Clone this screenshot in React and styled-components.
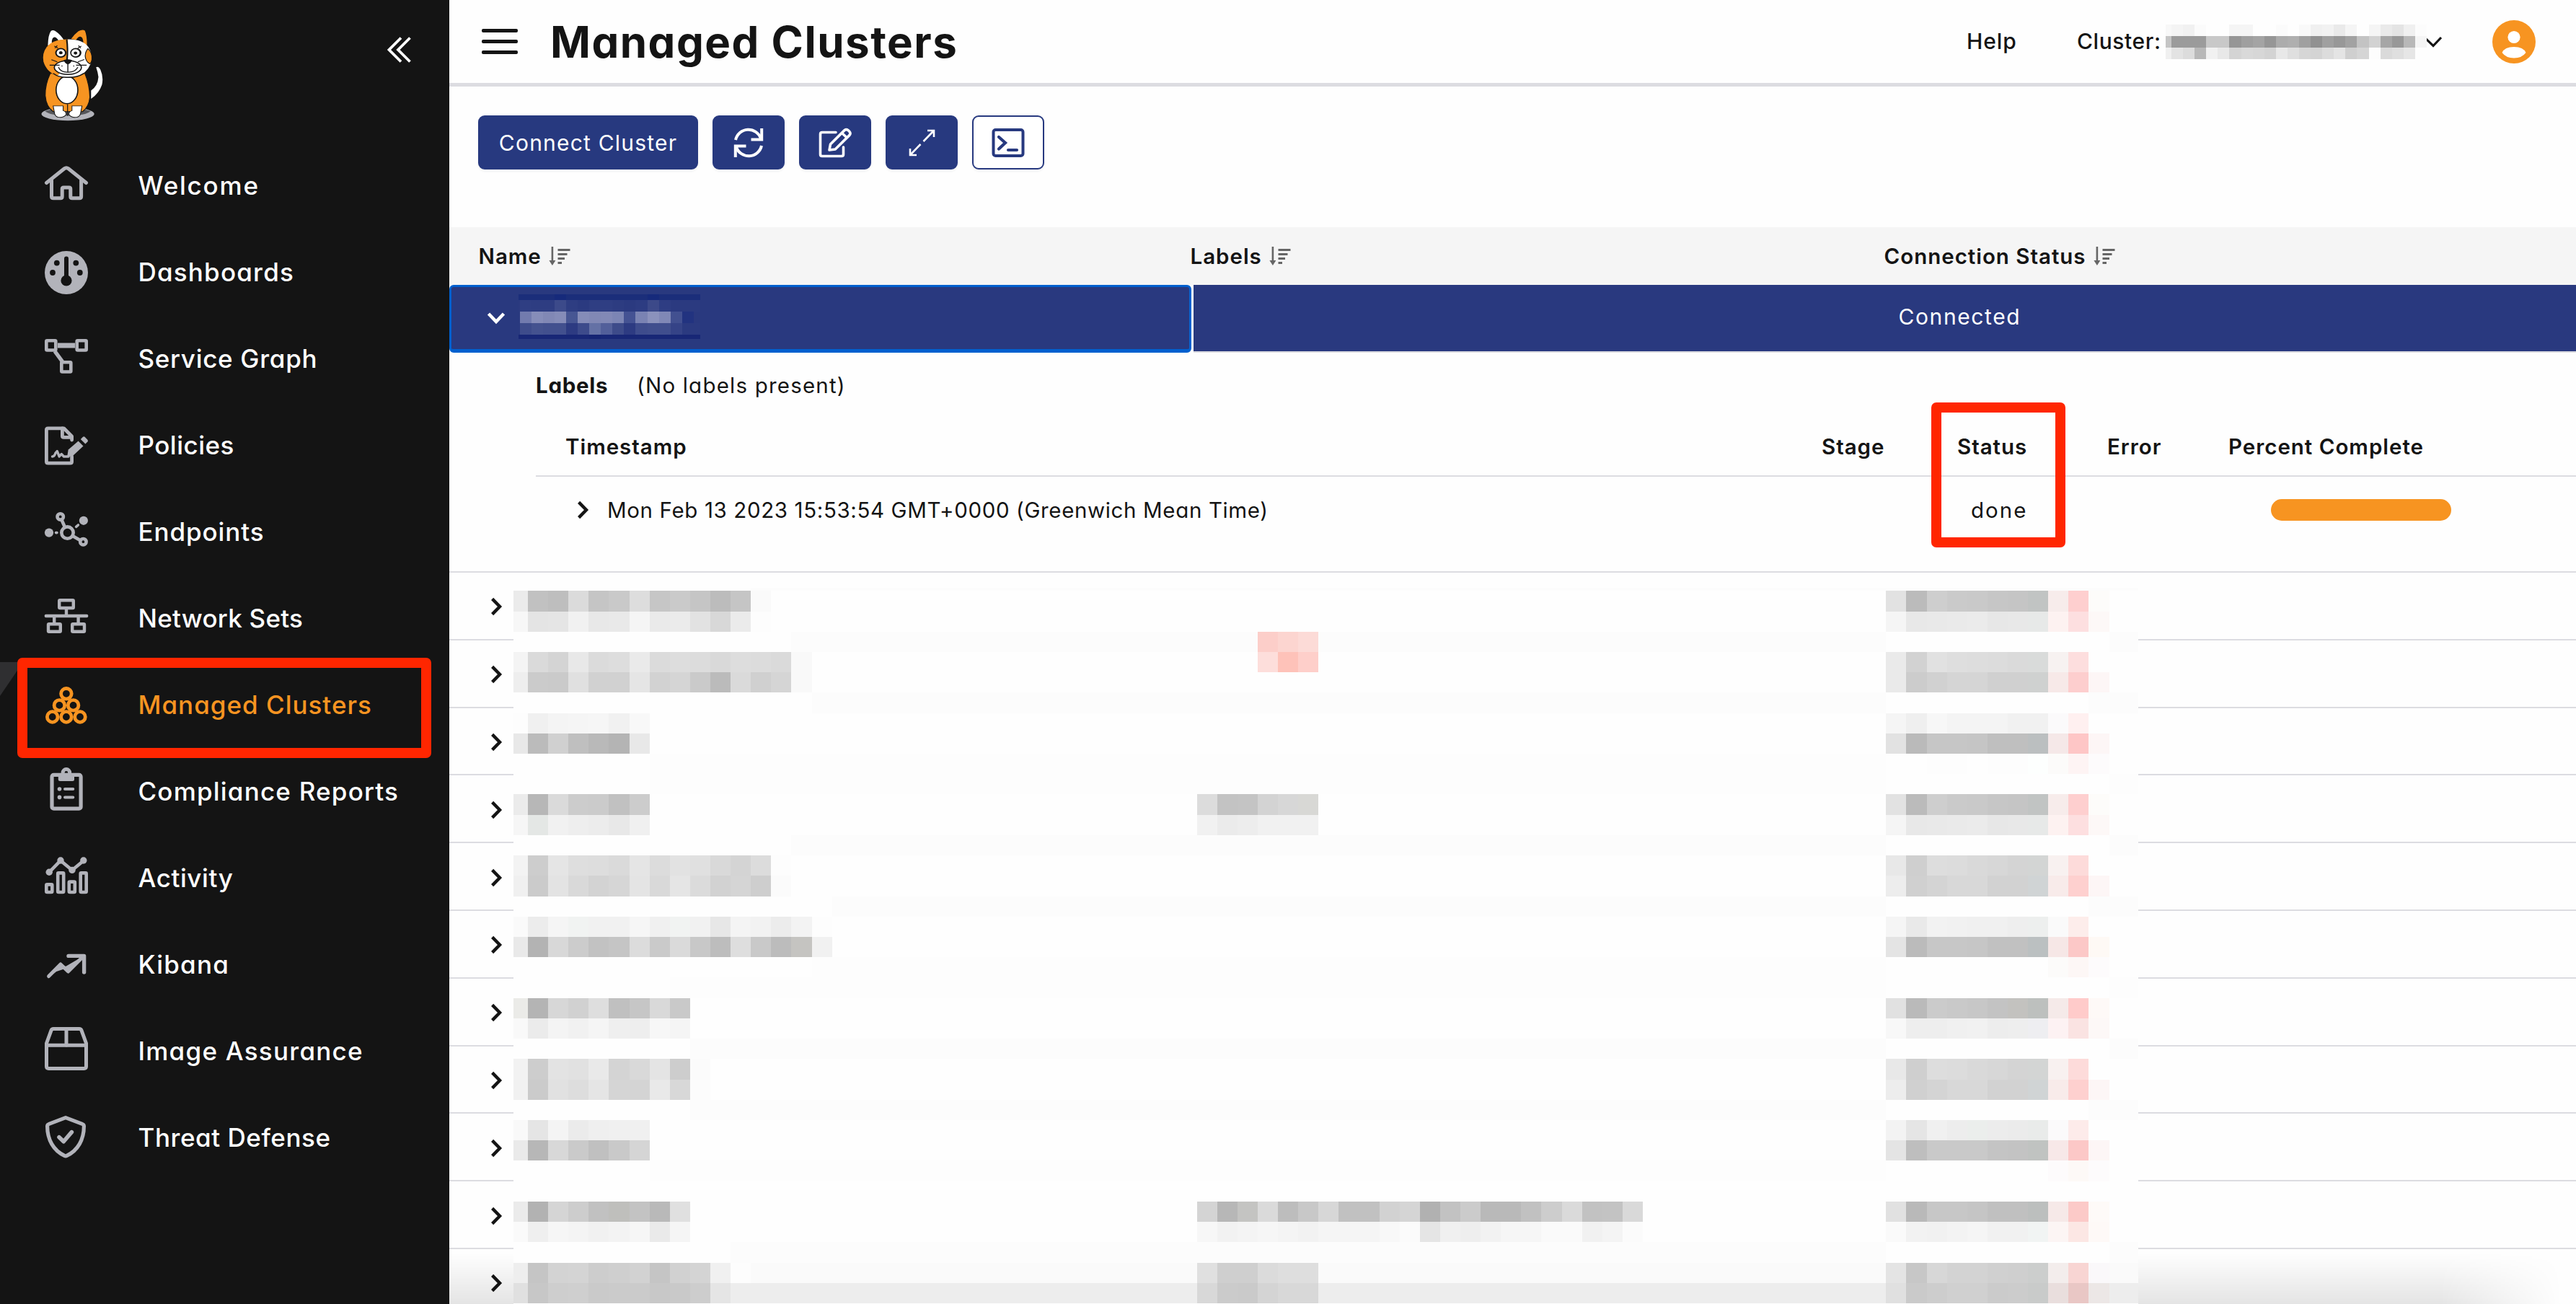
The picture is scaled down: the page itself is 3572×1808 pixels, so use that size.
import React from "react";
import styled, { createGlobalStyle } from "styled-components";

const Global = createGlobalStyle`
  * { box-sizing: border-box; }
  html, body { margin: 0; padding: 0; background: #fff; }
  body {
    font-family: Inter, "Open Sans", sans-serif;
    font-feature-settings: "cv11";
    color: #141414;
    overflow: hidden;
  }
`;

const orange = "#f79421";
const navy = "#27397f";
const rule = "#dcdce1";
const red = "#ff2600";

const Page = styled.div`
  display: flex;
  width: 3572px;
  height: 1808px;
  overflow: hidden;
`;

/* ---------- sidebar ---------- */
const Sidebar = styled.aside`
  flex: none;
  width: 623px;
  background: #141414;
`;
const Brand = styled.div`
  display: flex;
  justify-content: space-between;
  align-items: flex-start;
  height: 199px;
  padding: 41px 53px 0 57px;
`;
const Collapse = styled.svg`
  margin-top: 10px;
`;
const NavItem = styled.div`
  position: relative;
  display: flex;
  align-items: center;
  height: 120px;
  padding-left: 62px;
  color: ${(p) => (p.$active ? orange : "#fff")};
`;
const NavIcon = styled.svg`
  flex: none;
  width: 60px;
  height: 60px;
  margin-top: -10px;
  margin-right: 69.5px;
  overflow: visible;
  color: ${(p) => (p.$active ? orange : "#b2b3ba")};
`;
const NavLabel = styled.span`
  font-size: 35px;
  font-weight: 500;
  line-height: 40px;
  margin-top: -5px;
  white-space: nowrap;
  letter-spacing: ${(p) => p.$ls || 0}px;
`;
const ActiveWedge = styled.span`
  position: absolute;
  left: 0;
  top: -1px;
  width: 32px;
  height: 47px;
  background: #2f2f31;
  clip-path: polygon(0 0, 100% 0, 0 100%);
`;
const Highlight = styled.div`
  position: absolute;
  left: ${(p) => p.$x}px;
  top: ${(p) => p.$y}px;
  width: ${(p) => p.$w}px;
  height: ${(p) => p.$h}px;
  border: 14px solid ${red};
  border-radius: 7px;
`;

/* ---------- header ---------- */
const Main = styled.main`
  position: relative;
  display: flex;
  flex-direction: column;
  flex: 1;
  min-width: 0;
  background: #fefefe;
`;
const Header = styled.header`
  display: flex;
  align-items: center;
  flex: none;
  height: 120px;
  padding: 0 56px 0 45px;
  border-bottom: 5px solid ${rule};
`;
const Burger = styled.div`
  display: flex;
  flex-direction: column;
  gap: 10px;
  width: 50px;
  margin-right: 45px;
`;
const BurgerBar = styled.span`
  height: 5px;
  border-radius: 2px;
  background: #141414;
`;
const Title = styled.h1`
  flex: 1;
  margin: 0;
  font-size: 60px;
  line-height: 70px;
  font-weight: 700;
  white-space: nowrap;
  letter-spacing: 1.5px;
`;
const HeaderText = styled.span`
  width: ${(p) => p.$w}px;
  font-size: 30px;
  line-height: 36px;
  margin-top: -1px;
  white-space: nowrap;
  font-weight: 500;
  letter-spacing: ${(p) => p.$ls || 0}px;
`;
const HeaderChevron = styled.svg`
  margin-right: 69px;
`;

/* ---------- toolbar ---------- */
const Toolbar = styled.div`
  display: flex;
  flex: none;
  gap: 20px;
  height: 195px;
  padding: 40px 0 0 40px;
`;
const Button = styled.button`
  display: flex;
  align-items: center;
  justify-content: center;
  width: ${(p) => p.$w || 100}px;
  height: 75px;
  padding: 0;
  border: 2px solid ${navy};
  border-radius: 9px;
  background: ${(p) => (p.$outline ? "#fff" : navy)};
  color: ${(p) => (p.$outline ? navy : "#fff")};
  box-shadow: 0 3px 3px rgba(0, 0, 0, 0.04);
  font-family: inherit;
  font-feature-settings: inherit;
  font-size: 30px;
  white-space: nowrap;
  letter-spacing: 1.2px;
`;

/* ---------- table ---------- */
const columns = "987px 962px 1fr";
const TableHead = styled.div`
  display: grid;
  grid-template-columns: ${columns};
  align-items: center;
  flex: none;
  height: 80px;
  padding-left: 40.5px;
  background: #f5f5f5;
`;
const HeadCell = styled.div`
  display: flex;
  align-items: center;
  gap: 10px;
  font-size: 29.5px;
  line-height: 34px;
  font-weight: 600;
  white-space: nowrap;
  font-feature-settings: normal;
  letter-spacing: 0.98px;
`;
const SelectedRow = styled.div`
  display: flex;
  flex: none;
  height: 94px;
`;
const FocusCell = styled.div`
  display: flex;
  align-items: center;
  width: 1029px;
  padding-left: 49px;
  background: #29397f;
  border: 3px solid #0060cf;
  border-bottom-width: 5px;
  border-radius: 6px;
`;
const RowRest = styled.div`
  flex: 1;
  margin-left: 3px;
  padding: 26px 0 0 977.5px;
  background: #29397f;
  border-bottom: 2px solid ${rule};
  color: #fff;
  font-size: 30px;
  line-height: 36px;
  white-space: nowrap;
  font-feature-settings: normal;
  letter-spacing: 1.6px;
`;
const Row = styled.div`
  display: flex;
  align-items: center;
  flex: none;
  height: 93.8px;
  padding: 3px 0 0 57px;
  border-bottom: 2px solid ${rule};
`;

const Detail = styled.section`
  flex: none;
  height: 305px;
  padding-left: 120px;
  border-bottom: 2px solid ${rule};
`;
const DetailLabels = styled.div`
  display: flex;
  align-items: center;
  height: 89px;
  font-size: 29.5px;
  line-height: 34px;
  white-space: nowrap;
`;
const DetailName = styled.strong`
  width: 140px;
  font-weight: 700;
  letter-spacing: 0.7px;
`;
const Spaced = styled.span`
  letter-spacing: ${(p) => p.$ls || 0}px;
`;
const DetailGrid = styled.div`
  display: grid;
  grid-template-columns: 1742px 188px 208px 168px 1fr;
  align-items: center;
  padding-left: 41px;
  white-space: nowrap;
`;
const DetailHead = styled(DetailGrid)`
  height: 83px;
  border-bottom: 2px solid ${rule};
  font-size: 29.5px;
  font-weight: 600;
  font-feature-settings: normal;
  letter-spacing: 0.98px;
`;
const DetailRow = styled(DetailGrid)`
  height: 91px;
  font-size: 29.5px;
`;
const Stamp = styled.div`
  display: flex;
  align-items: center;
  gap: 25px;
  padding-left: 16px;
`;
const StatusCell = styled.div`
  grid-column: 3;
  padding-left: 19px;
  letter-spacing: 2px;
`;
const Progress = styled.div`
  grid-column: 5;
  width: 250px;
  height: 30px;
  margin-left: 59px;
  border-radius: 15px;
  background: ${orange};
`;

/* ---------- pixelated redactions ---------- */
const Pixels = styled.div`
  display: grid;
  flex: none;
  grid-template-columns: ${(p) => p.$cols};
  grid-template-rows: ${(p) => p.$rows};
`;
const NamePixels = styled(Pixels)`
  margin: 0 0 4px 18px;
`;
const PixelSheet = styled(Pixels)`
  position: absolute;
  left: 89px;
  top: 815px;
  width: 2253px;
  height: 993px;
  overflow: hidden;
  background: #fefefe;
`;
const Pixel = styled.i.attrs((p) => ({
  style: { gridRow: p.$r, gridColumn: `${p.$c} / span ${p.$n || 1}`, background: p.$bg },
}))``;
const BottomShade = styled.div`
  position: absolute;
  left: 0;
  right: 0;
  bottom: 0;
  height: 70px;
  background: linear-gradient(rgba(0, 0, 0, 0), rgba(0, 0, 0, 0.1));
  mask-image: linear-gradient(90deg, #000 2760px, transparent 2930px);
`;

const hex = (v) => "#" + (v.length === 2 ? v + v + v : v);
const strip = (row, col, text) =>
  text.split(" ").map((v, i) => <Pixel key={`${row}-${col + i}`} $r={row} $c={col + i} $bg={hex(v)} />);

const nameCells = [
  [0, "eb c1 be db c5 c9 dd c6 ca c5 bc c5 fa"],
  [1, "f7 e4 e5 f1 e8 e9 f5 ea eb e2 d8 eb fd"],
  [3, "f4 da d4 e8 db dd ea db dd dc d9 dd dc da f9"],
  [4, "ee cb ca e0 d1 d1 e5 d2 d5 ca bb da d0 d5 f9"],
  [6, "fd f0 f4 f5 f6 f1 f8"],
  [7, "e8 bb d0 bf b9 b4 e8"],
  [10, "eb b7 da cc cb c1 cc"],
  [11, "f6 e4e7e5 f1 ee ec e8 f0"],
  [13, "f3 cd e5 de dd da e5 dc e2 e0 d9 d4 dc fd"],
  [14, "f0 cb e3 d9 d3 d6 e4 d9 e5 db d2 d5 ce fb"],
  [16, "fa ec f5 f1f3f2 f1 f1 f6 f0 f1f3f2 f1 e7 f4 f2 ec f3 fd"],
  [17, "e9 b3 d8 cc c2 c5 dc ca da c8 bd de c9 bc c5c4c1 f1"],
  [20, "ebebe8 b4 d7 d1 de c0 c6 d9 c9"],
  [21, "f9 eb f4 f1 f5 ef ee f7 f5"],
  [23, "f2 cd e3 e1 e9 d4 d9 e4 cd fb"],
  [24, "f1 cb e1 dd e5 d5 d4 e9 d8 fc"],
  [26, "f9 e5 f4 eb ef f0 f0"],
  [27, "ea b7 d8 ca c0 c9 d5"],
  [30, "eb b2 d5 cd c1 bfbfbc c3 b9 e0"],
  [31, "fa ef f6 f4 f1 f3 f6 ea f5"],
  [33, "ee c5 d3 d4 cd cf d2 c5 d1 d4 f0 fd"],
  [34, "e0 c7 ce cf ca cb cb c8 c9 cd e5"],
];
const labelCells = [
  [2, 38, "fccec9 fcd5d0 fcdbd7"],
  [3, 38, "fddedb fec2b9 fecfca"],
  [10, 35, "dc c3 c4 d3 d7 d8d8d5"],
  [11, 35, "f1 eb ed f1 f1 f1"],
  [30, 35, "d4 b7 c4c4c2 da bd c8 d7 c1 c1 d2 d5 b1 c2 cb b9 b9 c1 cd da c2 c3 d9"],
  [31, 35, "f7 f2 f4 f6 f4 f2 f5 f5 f5 f8 fb e5 f0 ee f2 f6 f6 fa fa f1 f4 fb"],
  [33, 35, "e0 cf cf db de de"],
  [34, 35, "d8 cb ca d4 d8 d8"],
];
const sA = "e2 bb ce ca c9 c6 c5 c1c4c3 f7eceb fecfcf fdfcfa";
const sB = "f5 e8 e9 ea eb e7 e8 e7e9e8 fdf2f1 fddfe0 fdf8f7";
const sC = "e8 cf dd dc d9 d7 d4 d3d5d4 f8f1f0 fddbda";
const sD = "ed d0 d4 d8 d8 d2 d2 d0d4d5 f8ebea fed0cf fdf6f6";
const statusCells = [
  [0, sA],
  [1, sB],
  [3, "ea d2 e1 de dd dc da d9dbda f7f2f1 fddede"],
  [4, "ea cc d1 d5 d5 d0 d0 cfd1d0 f7e9e8 fdcece fdf6f6"],
  [6, "f5 ef f7 f4 f4 f4 f1 f1 fbfafb fff0f0"],
  [7, "e2 ba c6 c6 c5 bf bf bbbfc0 f5e8e8 fec6c6 fdf6f6"],
  [8, "fe fe fd fd fe fd fd fdfffe fcfbfa fef4f4 fdfbfc"],
  [10, sA],
  [11, sB],
  [13, sC],
  [14, sD],
  [16, "f5 e9 f2 f1 f0 f0 ee edefee fafafa fdedeb"],
  [17, "e4 bb c7 c7 c6 c1 c1 bbc0c1 f6e7e6 fcc8c7 fef9f5"],
  [18, "fe fe fe fe fe fe fe fe fcfbfa fdf7f6 fdfbfc"],
  [20, "e1 ba cb c9 c7 c3 c3c2bf bdc0be f5eae9 ffcbca fef9f7"],
  [21, "f8 ee ee f0 f1 ed ee eeeef1 fdf2f3 fae3e2 fdf8f7"],
  [23, sC],
  [24, sD],
  [26, "f3 e5 f0 ed ebeeec ec eb e9ebea fbfafb fdebea"],
  [27, "e4 be c9 c9 c9 c4 c3 c0c3c1 f7e8e8 fcc8c7 fdf6f6"],
  [28, "fe fe fe fe fe fe fe fe fdfbfc fdf9f7 fdfbfc"],
  [30, "e1 b9 c7 c7 c5 c0 c0 bcbfbe f6e9e8 fccac8 fefaf8"],
  [31, "fa f2 f1 f3 f5 f1 f1 f1f4f3 fcf5f4 fce7e4 fef9f7"],
  [33, "e4 c7 d7 d3 d3 d0 cf cccecd f3edec f8d5d3 faf8fa"],
  [34, "e0 ca cd d0 d0 cb cc c9cbca e9dedd e9c7c5 ece7e6"],
];
/* [row, first column, column count, colour] */
const bands = [
  [2, 15, 54, "fc"], [5, 16, 53, "fc"], [8, 8, 61, "fd"], [9, 8, 61, "fd"], [12, 15, 54, "fc"],
  [15, 17, 52, "fc"], [18, 16, 53, "fd"], [19, 9, 60, "fd"], [22, 10, 59, "fc"], [25, 10, 59, "fc"],
  [28, 8, 61, "fd"], [32, 12, 57, "fc"], [33, 13, 69, "fa"], [34, 12, 70, "ed"],
  [2, 80, 2, "fc"], [5, 79, 3, "fc"], [9, 80, 2, "fd"], [12, 80, 2, "fc"], [15, 79, 3, "fc"],
  [19, 80, 2, "fd"], [22, 80, 2, "fc"], [25, 79, 3, "fc"], [32, 80, 2, "fc"],
];

const headerPixels = [
  "f8 f4 f1 fb fe fe f5 f5 fe fe fb fe f9 f0 f2 ea f5 fe f5 ea e4 f0 fc",
  "c5 9b 9b 9b c8 c8 96 9f a4 96 ac af a0 91 a0 98 a2 c3 d2 a6 98 b8 f5",
  "f0 e3 dc b8 f1 e8 d4 d9 d7 d3 e8 df d6 d4 dc e4 cf d5 fd da df e6 fe",
];
const selectedPixels = [
  "1b2e7a 1b2e7a 1b2e7a 1b2e7a 162a7b 1b2e7a 1b2e7a 1b2e7a 1b2e7a 1b2e7a 1b2e7a 1b2e7a 162a7b 1b2e7a 1b2e7a 1b2e7a 1b2e7a",
  "2b3a80 2f3e83 2e3d82 2e3d82 3c4a8a 2e3d82 2b3a80 2f3e83 2f3e83 2d3c81 2b3a80 2d3c82 3c4989 2e3d83 2b3a80 2b3a80 2b3a80",
  "29397f 727bae 868db9 8188b5 858cb8 475693 858cb8 8188b5 8289b6 7c85b4 445293 7a83b3 8b92bc 8088b6 425090 223380 2a397f",
  "29397f 3e4c8b 44528f 42508e 42508e 2d3b82 3d4b8b 6471a5 525f9a 3d4b8a 2d3b82 3e4c8c 404e8d 404e8d 354387 2b3a80 2b3a80",
  "182776 182776 182776 182776 182776 182776 182776 152473 182776 182776 182776 182776 182776 182776 182776 182776 182776",
];

/* ---------- drawings ---------- */
const S = { fill: "none", stroke: "currentColor", strokeLinecap: "round", strokeLinejoin: "round" };

const icons = {
  home: (
    <g {...S} strokeWidth="5">
      <path d="M2.5 29.5 L27.2 9.8 Q30 7.6 32.8 9.8 L57.5 29.5" />
      <path d="M9.5 26 V48.5 Q9.5 50.7 12 50.7 H22 Q24.2 50.7 24.2 48.5 V38 Q24.2 36 26.2 36 H33.8 Q35.8 36 35.8 38 V48.5 Q35.8 50.7 38 50.7 H48.3 Q50.6 50.7 50.6 48.5 V26" />
    </g>
  ),
  gauge: (
    <g>
      <circle cx="30" cy="34" r="30" fill="currentColor" />
      <g fill="#141414">
        <rect x="27" y="11.5" width="6" height="34" rx="3" />
        <circle cx="30" cy="45" r="7.6" />
        <circle cx="16.8" cy="20.6" r="3.9" />
        <circle cx="43.3" cy="20.6" r="3.9" />
        <circle cx="11" cy="34" r="3.9" />
        <circle cx="48.8" cy="34" r="3.9" />
      </g>
    </g>
  ),
  graph: (
    <g {...S} strokeWidth="4.6">
      <rect x="2.3" y="8.3" width="13" height="13.2" rx="1" />
      <rect x="44.7" y="8.3" width="13" height="13.2" rx="1" />
      <rect x="23.3" y="38.3" width="13" height="13.2" rx="1" />
      <path d="M18 15 H42" strokeWidth="7" strokeLinecap="butt" />
      <path d="M14 23 L25 38" strokeWidth="5.4" strokeLinecap="butt" />
    </g>
  ),
  policy: (
    <g {...S} strokeWidth="4.8">
      <path d="M37.6 26 V21 L26.5 9.8 H4.5 Q2.4 9.8 2.4 12 V56 Q2.4 58.2 4.5 58.2 H35.5 Q37.6 58.2 37.6 56 V49" />
      <path d="M24.4 10 V20.5 Q24.4 22.4 26.4 22.4 H37" />
      <path d="M10.5 49 Q13.5 49 15 44 L17.2 41.5 L20.2 49 L23.2 45.5 L26.5 49 H33" strokeWidth="3.4" />
      <path d="M32.7 39.6 L46.6 27.6 L53.5 34.4 L39.5 47.4 L31 50 Z" fill="currentColor" stroke="none" />
      <path d="M49.8 25 L53 21.8 Q54.4 20.6 55.8 22 L59.4 25.8 Q60.6 27.2 59.4 28.6 L56.4 31.6 Z" fill="currentColor" stroke="none" />
    </g>
  ),
  endpoints: (
    <g {...S} strokeWidth="4.6">
      <circle cx="31.5" cy="34.6" r="8.2" />
      <circle cx="21.7" cy="12.4" r="4.2" />
      <circle cx="53.4" cy="47.2" r="4.2" />
      <circle cx="53.9" cy="17.8" r="6.1" fill="currentColor" stroke="none" />
      <circle cx="6" cy="34.6" r="6.1" fill="currentColor" stroke="none" />
      <path d="M23.8 17.5 L28 27 M38.6 39 L49 45" />
      <path d="M15.5 34.6 H17 M43.6 26.4 L46.4 24" strokeWidth="3.6" />
    </g>
  ),
  network: (
    <g {...S} strokeWidth="4.4">
      <rect x="20.2" y="8.2" width="19.6" height="10.8" rx="1" />
      <rect x="5" y="41.2" width="16.8" height="10.6" rx="1" />
      <rect x="38.2" y="41.2" width="16.8" height="10.6" rx="1" />
      <path d="M30 20 V30 M13.2 30 V40 M46.6 30 V40" strokeLinecap="butt" />
      <path d="M1.8 30 H58.2" />
    </g>
  ),
  clusters: (
    <g {...S} strokeWidth="4.8">
      <circle cx="29.9" cy="17.8" r="7.3" />
      <circle cx="20.4" cy="33.9" r="7.3" />
      <circle cx="39.6" cy="33.9" r="7.3" />
      <circle cx="10.7" cy="50" r="7.3" />
      <circle cx="29.9" cy="50" r="7.3" />
      <circle cx="49" cy="50" r="7.3" />
    </g>
  ),
  compliance: (
    <g {...S} strokeWidth="5.2">
      <rect x="10" y="10.4" width="40.1" height="46.8" rx="2.5" />
      <path d="M18.8 11 H41 V16.5 Q41 19 38.5 19 H21.3 Q18.8 19 18.8 16.5 Z" fill="currentColor" stroke="none" />
      <circle cx="29.9" cy="7.4" r="4.8" strokeWidth="5" />
      <path d="M28 30 H39.3 M28 41.4 H39.3" strokeWidth="4" />
      <circle cx="20.5" cy="30" r="2.8" fill="currentColor" stroke="none" />
      <circle cx="20.5" cy="41.4" r="2.8" fill="currentColor" stroke="none" />
    </g>
  ),
  activity: (
    <g {...S} strokeWidth="4.6">
      <rect x="2.3" y="42.4" width="8" height="10.6" rx="1" />
      <rect x="18.2" y="26.4" width="8" height="26.6" rx="1" />
      <rect x="33.8" y="38.6" width="8" height="14.4" rx="1" />
      <rect x="49.7" y="26.4" width="8" height="26.6" rx="1" />
      <path d="M6.2 25.4 L22 9.2 L38 22.6 L54 9.2" />
      <g fill="currentColor" stroke="none">
        <circle cx="6.2" cy="25.2" r="4.7" />
        <circle cx="22" cy="9" r="4.7" />
        <circle cx="38" cy="22.4" r="4.7" />
        <circle cx="53.8" cy="9" r="4.7" />
      </g>
    </g>
  ),
  kibana: (
    <g {...S} strokeWidth="5">
      <path d="M5.6 49.6 L22 33 L32.5 43 L53 22.5" />
      <path d="M22 33 L32.5 43 L53 23 L29 37 Z M8 48 L22 33 L25 39 L16 42 Z" fill="currentColor" strokeWidth="2" />
      <path d="M33 21.4 H54.6 V44" strokeWidth="5.4" />
    </g>
  ),
  image: (
    <g {...S} strokeWidth="5">
      <path d="M2.5 25.2 H57.5 V54.5 Q57.5 57.4 54.6 57.4 H5.4 Q2.5 57.4 2.5 54.5 Z" />
      <path d="M2.5 25.2 V22.5 L9 4.6 Q9.8 2.6 12 2.6 H48 Q50.2 2.6 51 4.6 L57.5 22.5 V25" />
      <path d="M30 3 V25" />
    </g>
  ),
  shield: (
    <g {...S} strokeWidth="5.2">
      <path d="M29 5.6 L52 14.4 Q54.4 15.2 54.4 17.6 C54.4 36 46 51 30.6 58.4 Q29 59.2 27.4 58.4 C12 51 3.6 36 3.6 17.6 Q3.6 15.2 6 14.4 Z" />
      <path d="M20 32.8 L26.2 38.8 L37.4 25.6" strokeWidth="5.6" />
    </g>
  ),
};

const Logo = () => (
  <svg width="86" height="127" viewBox="139 116 211 355" preserveAspectRatio="none">
    <ellipse cx="230" cy="443" rx="90" ry="26" fill="#b2b3ba" />
    <path d="M152 432 Q230 405 308 432 Q290 450 230 450 Q170 450 152 432Z" fill="#55565a" />
    <path d="M326 262 Q334 256 341 272 Q352 300 346 330 Q336 364 309 384 V352 Q332 335 334 300 Q332 280 326 262Z" fill="#fff" />
    <path d="M170 286 Q152 330 153 372 Q156 415 180 434 H280 Q302 415 305 378 Q304 330 288 286Z" fill={orange} stroke="#141414" strokeWidth="3" />
    <path d="M229 405 V450" stroke="#141414" strokeWidth="3" />
    <ellipse cx="227" cy="350" rx="37" ry="53" fill="#fff" stroke="#141414" strokeWidth="4" />
    <path d="M180 412 H214 V430 Q226 434 224 446 Q216 458 200 456 Q188 455 185 442Z" fill="#fff" stroke="#141414" strokeWidth="2.5" />
    <path d="M278 412 H244 V430 Q232 434 234 446 Q242 458 258 456 Q270 455 273 442Z" fill="#fff" stroke="#141414" strokeWidth="2.5" />
    <path d="M162 178 Q163 136 172 122 Q178 115 188 122 Q206 136 216 156 L198 158 Q186 138 178 150 Q174 160 176 172Z" fill="#fff" />
    <path d="M295 176 Q295 138 288 120 Q280 114 266 122 Q250 136 241 152 L258 156 Q270 136 279 148 Q284 160 282 170Z" fill={orange} />
    <path d="M230 154 Q180 153 158 184 Q142 208 147 240 Q158 284 200 298 H230Z" fill={orange} />
    <path d="M230 154 Q280 153 300 184 Q318 215 308 248 Q292 290 256 300 H200 Q190 290 198 292 L230 240Z" fill="#fff" />
    <path d="M298 190 Q314 205 312 232 Q310 245 305 249 Q290 240 289 218 Q290 200 298 190Z" fill={orange} stroke="#141414" strokeWidth="3" />
    <path d="M226 154 Q231 190 227 236" stroke="#141414" strokeWidth="5" fill="none" />
    <ellipse cx="230" cy="263" rx="46" ry="27" fill="#fff" stroke="#141414" strokeWidth="4" />
    <path d="M216 234 Q230 228 244 234 Q240 248 230 251 Q220 248 216 234Z" fill="#141414" />
    <path d="M230 250 V280 M198 262 Q206 282 230 281 Q254 282 264 262" stroke="#141414" strokeWidth="3.4" fill="none" />
    <path d="M168 254 H202 M174 233 L194 241 M258 254 H294 M264 241 L286 232 M184 180 L196 188 M186 188 L194 178 M264 188 L276 180 M266 178 L274 188" stroke="#141414" strokeWidth="3" />
    <g fill="#141414">
      <circle cx="206" cy="206" r="19" />
      <circle cx="257" cy="206" r="19" />
      <circle cx="210" cy="257" r="2" />
      <circle cx="250" cy="257" r="2" />
    </g>
    <g fill="#fff">
      <circle cx="206" cy="206" r="14" />
      <circle cx="256" cy="206" r="14" />
    </g>
    <circle cx="206" cy="206" r="6" fill="#141414" />
    <circle cx="256" cy="207" r="6" fill="#141414" />
    <path d="M180 286 Q200 303 230 301 Q262 302 284 286" stroke="#141414" strokeWidth="4" fill="none" />
  </svg>
);

const SortIcon = () => (
  <svg width="30" height="28" viewBox="0 0 30 28" fill="#666">
    <path d="M3.6 1 H6.2 V20 H9.4 L4.9 27 L0.4 20 H3.6Z" />
    <path d="M12.5 4 H29.5 V7 H12.5Z M12.5 10 H25.5 V13 H12.5Z M12.5 16 H22 V19 H12.5Z M12.5 22 H18 V25 H12.5Z" />
  </svg>
);
const RightChevron = () => (
  <svg width="17" height="26" viewBox="0 0 17 26" fill="none" stroke="#141414" strokeWidth="4.4">
    <path d="M2.6 2.4 L13 13 L2.6 23.6" />
  </svg>
);
const RefreshIcon = () => (
  <svg width="42" height="42" viewBox="0 0 42 42" fill="none" stroke="#fff" strokeWidth="4">
    <path d="M3 17 A18.2 18.2 0 0 1 38 15" />
    <path d="M39.2 1 V16.6 H24.5" />
    <path d="M39 25 A18.2 18.2 0 0 1 4 27" />
    <path d="M2.8 41 V25.4 H17.5" />
  </svg>
);
const EditIcon = () => (
  <svg width="47" height="42" viewBox="0 0 47 42" fill="none" stroke="#fff" strokeWidth="3.6" strokeLinejoin="round" strokeLinecap="round">
    <path d="M24 6.5 H5 Q2.5 6.5 2.5 9 V37 Q2.5 39.5 5 39.5 H32 Q34.5 39.5 34.5 37 V27" />
    <path d="M15 31 L16.5 23 L36 3.6 Q38.5 1.6 41 3.6 L43 5.6 Q45 8 43 10.4 L23.2 30 Z M32.5 7.5 L39.5 14" />
  </svg>
);
const ExpandIcon = () => (
  <svg width="37" height="38" viewBox="0 0 37 38" fill="none" stroke="#fff" strokeWidth="2.6">
    <path d="M26 2 H35 V11 M35 2 L20.5 17 M11 36 H2 V27 M2 36 L16.5 21" />
  </svg>
);
const TerminalIcon = () => (
  <svg width="46" height="42" viewBox="0 0 46 42" fill="none" stroke={navy} strokeWidth="4" strokeLinecap="round">
    <rect x="2.5" y="3" width="41" height="36" rx="3" strokeWidth="4" />
    <path d="M10 13 L19 21 L10 29.5" strokeWidth="4.2" />
    <path d="M23 31 H35" strokeWidth="4.2" />
  </svg>
);

/* [label, icon, letter spacing] */
const nav = [
  ["Welcome", "home", 1.8],
  ["Dashboards", "gauge", 1.2],
  ["Service Graph", "graph", 0.7],
  ["Policies", "policy", 0.5],
  ["Endpoints", "endpoints", 0.9],
  ["Network Sets", "network", 0.25],
  ["Managed Clusters", "clusters", 1],
  ["Compliance Reports", "compliance", 1.2],
  ["Activity", "activity", 0.6],
  ["Kibana", "kibana", 1.2],
  ["Image Assurance", "image", 1.25],
  ["Threat Defense", "shield", 0.55],
];

export default function App() {
  return (
    <Page>
      <Global />
      <Sidebar>
        <Brand>
          <Logo />
          <Collapse width="34" height="36" viewBox="0 0 34 36" fill="none" stroke="#fff" strokeWidth="3.8">
            <path d="M20 1.5 L3.5 18 L20 34.5 M32.5 1.5 L16 18 L32.5 34.5" />
          </Collapse>
        </Brand>
        {nav.map(([label, icon, spacing]) => {
          const active = icon === "clusters";
          return (
            <NavItem key={label} $active={active}>
              {active && <ActiveWedge />}
              <NavIcon viewBox="0 0 60 60" $active={active}>{icons[icon]}</NavIcon>
              <NavLabel $ls={spacing}>{label}</NavLabel>
              {active && <Highlight $x={24} $y={-7} $w={574} $h={139} />}
            </NavItem>
          );
        })}
      </Sidebar>

      <Main>
        <Header>
          <Burger>
            <BurgerBar />
            <BurgerBar />
            <BurgerBar />
          </Burger>
          <Title>Managed Clusters</Title>
          <HeaderText $w={153} $ls={0.9}>Help</HeaderText>
          <HeaderText $w={123} $ls={0.6}>Cluster:</HeaderText>
          <Pixels $cols="8px repeat(22, 16.1px)" $rows="repeat(3, 16px)">
            {headerPixels.map((t, i) => strip(i + 1, 1, t))}
          </Pixels>
          <HeaderChevron width="22" height="18" viewBox="0 0 22 18" fill="none" stroke="#141414" strokeWidth="3.2">
            <path d="M-2 4 L9 14.5 L20 3" />
          </HeaderChevron>
          <svg width="60" height="60" viewBox="0 0 60 60">
            <circle cx="30" cy="30" r="30" fill={orange} />
            <circle cx="30" cy="23.5" r="8.6" fill="#fff" />
            <path d="M13.5 45 Q17 37 30 37 Q43 37 46.5 45 Q41 52.5 30 52.5 Q19 52.5 13.5 45Z" fill="#fff" />
          </svg>
        </Header>

        <Toolbar>
          <Button $w={305}>Connect Cluster</Button>
          <Button><RefreshIcon /></Button>
          <Button><EditIcon /></Button>
          <Button><ExpandIcon /></Button>
          <Button $outline><TerminalIcon /></Button>
        </Toolbar>

        <TableHead>
          <HeadCell>Name<SortIcon /></HeadCell>
          <HeadCell>Labels<SortIcon /></HeadCell>
          <HeadCell>Connection Status<SortIcon /></HeadCell>
        </TableHead>

        <SelectedRow>
          <FocusCell>
            <svg width="26" height="18" viewBox="0 0 26 18" fill="none" stroke="#fff" strokeWidth="4.6">
              <path d="M2.5 3 L13 14 L23.5 3" />
            </svg>
            <NamePixels $cols="2px repeat(15, 16.05px) 9px" $rows="8px 16px 16px 16px 6px">
              {selectedPixels.map((t, i) => strip(i + 1, 1, t))}
            </NamePixels>
          </FocusCell>
          <RowRest>Connected</RowRest>
        </SelectedRow>

        <Detail>
          <DetailLabels>
            <DetailName>Labels</DetailName>
            <Spaced $ls={1.2}>(No labels present)</Spaced>
          </DetailLabels>
          <DetailHead>
            <span>Timestamp</span>
            <span>Stage</span>
            <span>Status</span>
            <span>Error</span>
            <span>Percent Complete</span>
          </DetailHead>
          <DetailRow>
            <Stamp>
              <RightChevron />
              <Spaced $ls={0.63}>Mon Feb 13 2023 15:53:54 GMT+0000 (Greenwich Mean Time)</Spaced>
            </Stamp>
            <StatusCell>done</StatusCell>
            <Progress />
          </DetailRow>
        </Detail>

        {Array.from({ length: 11 }, (_, i) => (
          <Row key={i}><RightChevron /></Row>
        ))}

        <BottomShade />
        <PixelSheet $cols="20px repeat(80, 28.12px)" $rows="4.3px repeat(35, 28.23px)">
          <Pixel $r={1} $c={13} $n={69} $bg="#fcfcfc" />
          {bands.map(([r, c, n, v]) => (
            <Pixel key={`${r}b${c}`} $r={r + 2} $c={c} $n={n} $bg={hex(v)} />
          ))}
          {nameCells.map(([r, t]) => strip(r + 2, 1, t))}
          {labelCells.map(([r, c, t]) => strip(r + 2, c, t))}
          {statusCells.map(([r, t]) => strip(r + 2, 69, t))}
        </PixelSheet>
        <Highlight $x={2055} $y={558} $w={186} $h={201} />
      </Main>
    </Page>
  );
}
